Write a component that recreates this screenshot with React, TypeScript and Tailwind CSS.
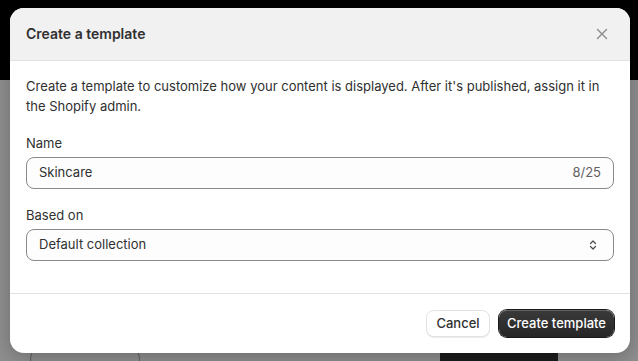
import React from 'react';

const CloseIcon: React.FC = () => (
  <svg width="12" height="12" viewBox="0 0 12 12" fill="none">
    <path d="M1.5 1.5l9 9M10.5 1.5l-9 9" stroke="#8a8a8a" strokeWidth="1.4" strokeLinecap="round" />
  </svg>
);

const SelectIcon: React.FC = () => (
  <svg width="10" height="14" viewBox="0 0 10 14" fill="none">
    <path d="M2.5 5.5l2.5-2.5 2.5 2.5M2.5 8.5l2.5 2.5 2.5-2.5" stroke="#4a4a4a" strokeWidth="1.2" strokeLinecap="round" strokeLinejoin="round" />
  </svg>
);

const App: React.FC = () => {
  return (
    <div
      className="relative w-[638px] h-[361px] overflow-hidden bg-[#8f8f8f] text-[13px] text-[#303030]"
      style={{ fontFamily: 'Inter, "Noto Sans", sans-serif' }}
    >
      {/* page behind the overlay */}
      <div className="h-[80px] bg-black" />
      <div className="absolute left-[440px] top-[345px] w-[118px] h-[20px] bg-[#1c1c1c]" />
      <div className="absolute left-[30px] top-[340px] w-[110px] h-[40px] rounded-full border border-[#5f5f5f]" />

      {/* modal */}
      <div className="absolute left-[10px] top-[8px] w-[620px] h-[345px] flex flex-col rounded-[14px] bg-white overflow-hidden shadow-[0_4px_20px_rgba(0,0,0,0.25)]">
        <header className="h-[53px] flex items-center justify-between pl-4 pr-4 bg-[#f1f1f1] border-b border-[#e3e3e3]">
          <h2 className="text-[14px] font-semibold leading-5 text-[#303030]">Create a template</h2>
          <button className="w-6 h-6 flex items-center justify-center rounded-md">
            <CloseIcon />
          </button>
        </header>

        <div className="h-[232px] px-4 pt-[15px] flex flex-col">
          <p className="leading-5">
            Create a template to customize how your content is displayed. After it's published, assign it in the
            Shopify admin.
          </p>

          <label className="mt-[17px] leading-5">Name</label>
          <div className="mt-1 h-8 flex items-center justify-between px-3 rounded-lg border border-[#8a8a8a] bg-[#fdfdfd]">
            <span>Skincare</span>
            <span className="text-[#616161]">8/25</span>
          </div>

          <label className="mt-4 leading-5">Based on</label>
          <div className="mt-1 h-8 flex items-center justify-between pl-3 pr-[15px] rounded-lg border border-[#8a8a8a] bg-[#fdfdfd]">
            <span>Default collection</span>
            <SelectIcon />
          </div>
        </div>

        <footer className="flex-1 flex items-center justify-end gap-[9px] px-4 border-t border-[#e3e3e3]">
          <button className="h-[27px] w-[64px] rounded-lg border border-[#e3e3e3] bg-white font-medium text-[#303030] shadow-[0_1px_0_rgba(0,0,0,0.08)]">
            Cancel
          </button>
          <button className="h-[27px] w-[115px] rounded-lg bg-gradient-to-b from-[#3a3a3a] to-[#262626] font-medium text-white shadow-[inset_0_1px_0_rgba(255,255,255,0.2),0_0_0_1px_#1a1a1a]">
            Create template
          </button>
        </footer>
      </div>
    </div>
  );
};

export default App;
